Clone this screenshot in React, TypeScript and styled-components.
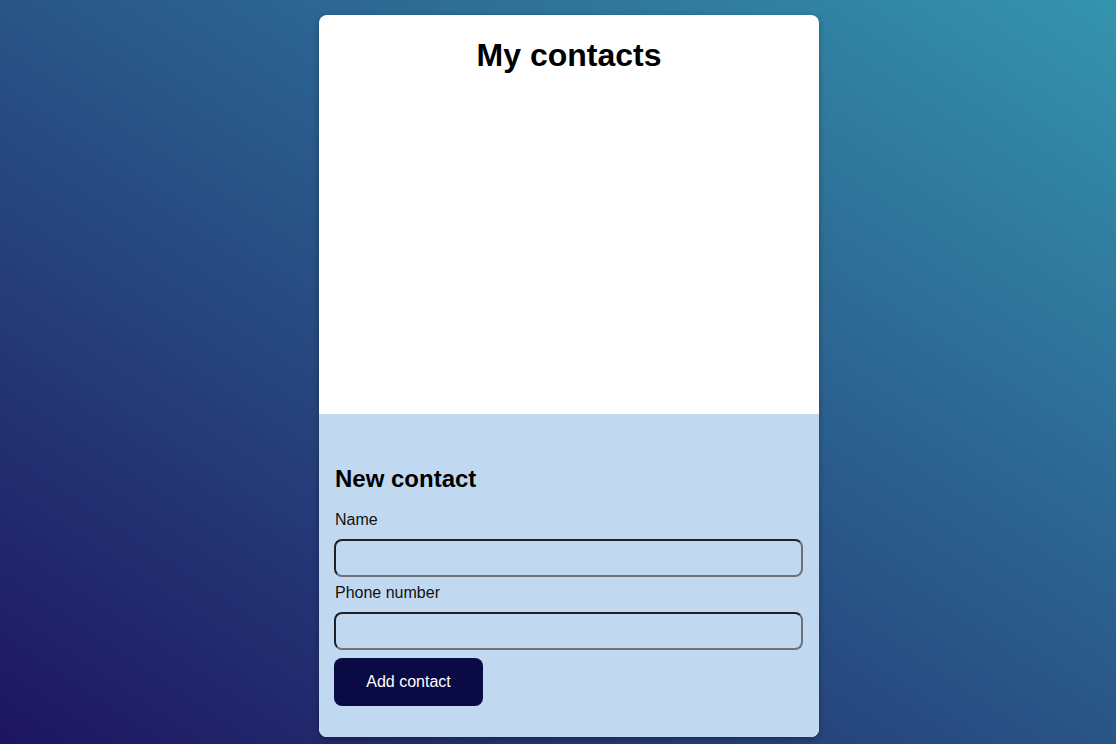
import React, {useState} from 'react';
import styled, {createGlobalStyle} from 'styled-components';

const GlobalStyle = createGlobalStyle`
    html, body {
        margin: 0;
        height: 100%;
    }
    body {
        font-family: "Liberation Sans", Arial, sans-serif;
        background: linear-gradient(to top right, #1e1560, #3494ae);
        background-attachment: fixed;
        min-height: 744px;
    }
`;

const Page = styled.main`
    display: flex;
    justify-content: center;
    padding: 15px 0 7px 22px;
`;

const Card = styled.div`
    width: 500px;
    border-radius: 8px;
    overflow: hidden;
    background: #ffffff;
    box-shadow: 0 2px 6px rgba(0, 0, 0, 0.3);
`;

const ContactList = styled.section`
    height: 399px;
    padding-top: 22px;
    box-sizing: border-box;
`;

const Title = styled.h1`
    margin: 0;
    font-size: 32px;
    line-height: 37px;
    font-weight: bold;
    text-align: center;
    color: #000;
`;

const FormSection = styled.section`
    background: #c0d9f0;
    padding: 51px 16px 31px 15px;
`;

const Subtitle = styled.h2`
    margin: 0 0 18px 1px;
    font-size: 24px;
    line-height: 28px;
    font-weight: bold;
    color: #000;
`;

const Form = styled.form`
    display: flex;
    flex-direction: column;
    align-items: flex-start;
`;

const Label = styled.label`
    font-size: 16px;
    line-height: 18px;
    color: #111;
    margin: 0 0 10px 1px;
`;

const Input = styled.input`
    width: 469px;
    height: 38px;
    box-sizing: border-box;
    border: 2px solid #3a3f48;
    border-top-color: #1e2026;
    border-left-color: #1e2026;
    border-right-color: #6d7278;
    border-bottom-color: #6d7278;
    border-radius: 8px;
    background: transparent;
    margin-bottom: 7px;
    padding: 0 8px;
    font-size: 16px;

    &:last-of-type {
        margin-bottom: 8px;
    }
`;

const Button = styled.button`
    width: 149px;
    height: 48px;
    border: none;
    border-radius: 8px;
    background: #0a0a45;
    color: #fff;
    font-family: "Liberation Sans", Arial, sans-serif;
    font-size: 16px;
    cursor: pointer;
`;

const App = () => {
    const [name, setName] = useState('');
    const [phone, setPhone] = useState('');

    return (
        <>
            <GlobalStyle />
            <Page>
                <Card>
                    <ContactList>
                        <Title>My contacts</Title>
                    </ContactList>
                    <FormSection>
                        <Subtitle>New contact</Subtitle>
                        <Form onSubmit={(event) => event.preventDefault()}>
                            <Label htmlFor="name">Name</Label>
                            <Input id="name" type="text" value={name} onChange={(event) => setName(event.target.value)} />
                            <Label htmlFor="phone">Phone number</Label>
                            <Input id="phone" type="tel" value={phone} onChange={(event) => setPhone(event.target.value)} />
                            <Button type="submit">Add contact</Button>
                        </Form>
                    </FormSection>
                </Card>
            </Page>
        </>
    );
};

export default App;
